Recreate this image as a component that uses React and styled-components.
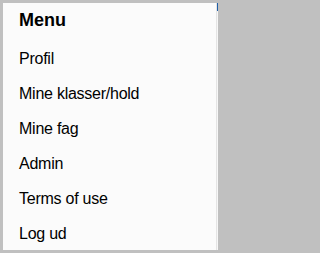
import styled, { createGlobalStyle } from "styled-components";

const GlobalStyle = createGlobalStyle`
  html, body {
    margin: 0;
    padding: 0;
    background: #c0c0c0;
  }
`;

const Frame = styled.div`
  width: 220px;
  height: 253px;
  box-sizing: border-box;
  padding: 3px 2px 3px 3px;
  background: #c0c0c0;
  display: flex;
`;

const Panel = styled.nav`
  flex: 1;
  background: #fbfbfb;
  display: flex;
  flex-direction: column;
  padding: 0 0 0 16px;
  overflow: hidden;
  font-family: "Liberation Sans", Arial, sans-serif;
  color: #000;
`;

const Edge = styled.div`
  width: 2px;
  display: flex;
  flex-direction: column;
  border-left: 1px solid #e4e4e4;
  background: #f6f6f6;
  box-sizing: border-box;
`;

const EdgeMark = styled.div`
  height: 8px;
  background: #1f5fa8;
`;

const Title = styled.div`
  font-weight: bold;
  font-size: 18px;
  height: 34px;
  line-height: 34px;
  margin-bottom: 4px;
`;

const Item = styled.a`
  display: block;
  flex-shrink: 0;
  font-size: 16px;
  letter-spacing: -0.25px;
  height: 35px;
  line-height: 35px;
  color: #000;
  text-decoration: none;
  cursor: pointer;
`;

const items = ["Profil", "Mine klasser/hold", "Mine fag", "Admin", "Terms of use", "Log ud"];

export default function App() {
  return (
    <>
      <GlobalStyle />
      <Frame>
        <Panel>
          <Title>Menu</Title>
          {items.map((label) => (
            <Item key={label}>{label}</Item>
          ))}
        </Panel>
        <Edge>
          <EdgeMark />
        </Edge>
      </Frame>
    </>
  );
}
